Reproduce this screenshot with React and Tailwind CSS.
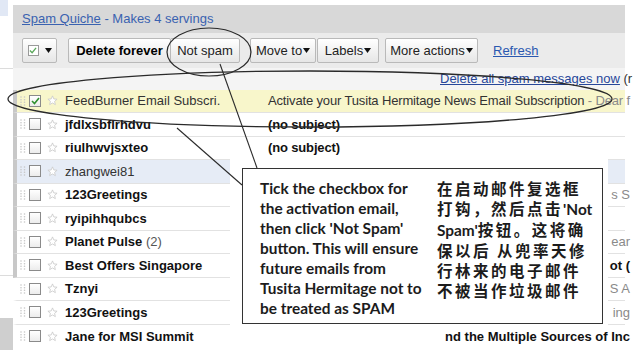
import React from 'react'

const rows = [
  { from: 'FeedBurner Email Subscri.', read: true, checked: true, bg: 'bg-[#f8f6cb]', subject: 'Activate your Tusita Hermitage News Email Subscription', snippet: ' - Dear f' },
  { from: 'jfdlxsbflrhdvu', subject: '(no subject)' },
  { from: 'riulhwvjsxteo', subject: '(no subject)' },
  { from: 'zhangwei81', read: true, bg: 'bg-[#e6ecf6]' },
  { from: '123Greetings', tail: 's S' },
  { from: 'ryipihhqubcs' },
  { from: 'Planet Pulse', count: '(2)', tail: 'ear' },
  { from: 'Best Offers Singapore', tail: 'ot (', tailBold: true },
  { from: 'Tznyi', tail: 'S A' },
  { from: '123Greetings', tail: 'ing' },
  { from: 'Jane for MSI Summit', tail: 'nd the Multiple Sources of Inc', tailBold: true },
]

const english = [
  'Tick the checkbox for',
  'the activation email,',
  "then click 'Not Spam'",
  'button. This will ensure',
  'future emails from',
  'Tusita Hermitage not to',
  'be treated as SPAM',
]

// latin bits inside the chinese lines get their own font and no tracking
const chinese = [
  ['在启动邮件复选框'],
  ['打钩，然后点击', "'Not"],
  ["Spam'", '按钮。这将确'],
  ['保以后 从兜率天修'],
  ['行林来的电子邮件'],
  ['不被当作垃圾邮件'],
]

const isLatin = (s) => /^[A-Za-z']+$/.test(s)

const Grip = () => (
  <svg width="6" height="10" viewBox="0 0 6 10" className="shrink-0">
    {[1, 3.7, 6.3, 9].map((y) =>
      [1, 4.5].map((x) => <circle key={`${x}-${y}`} cx={x} cy={y} r="0.8" fill="#c6c6c6" />)
    )}
  </svg>
)

const Check = ({ checked }) => (
  <span className="flex h-[12px] w-[12px] shrink-0 items-center justify-center border border-[#8a8a8a] bg-gradient-to-b from-white to-[#ececec]">
    {checked && (
      <svg width="9" height="8" viewBox="0 0 9 8">
        <path d="M1 4l2.5 2.5L8 1" fill="none" stroke="#2f8f2f" strokeWidth="1.6" />
      </svg>
    )}
  </span>
)

const Star = () => (
  <svg width="11" height="11" viewBox="0 0 24 24" className="shrink-0">
    <path
      d="M12 2l2.9 6.6 7.1.6-5.4 4.7 1.6 7.1L12 17.3 5.8 21l1.6-7.1L2 9.2l7.1-.6z"
      fill="#fff"
      stroke="#c9c9c9"
      strokeWidth="1.8"
      strokeLinejoin="round"
    />
  </svg>
)

const Caret = () => (
  <svg width="7" height="5" viewBox="0 0 7 5" className="ml-[1px] inline-block">
    <path d="M0 0h7L3.5 5z" fill="#111" />
  </svg>
)

const btn =
  'flex h-[25px] items-center justify-center rounded-[2px] border border-[#b9b9b9] bg-gradient-to-b from-white to-[#e6e6e6] text-[13px] text-[#222]'

function Row({ r, i, last }) {
  return (
    <div
      className={`flex h-[23.5px] items-center border-l-4 ${last ? '' : 'border-b border-b-[#e2e2e2]'} ${
        i < 8 ? 'border-l-[#c8c8c8]' : 'border-l-white'
      } ${r.bg || 'bg-white'}`}
    >
      <span className="ml-[3px]">
        <Grip />
      </span>
      <span className="ml-[3px]">
        <Check checked={r.checked} />
      </span>
      <span className="ml-[6px]">
        <Star />
      </span>
      <span
        className={`ml-[7px] w-[203px] shrink-0 whitespace-nowrap text-[13px] ${
          r.read ? 'font-normal text-[#333]' : 'font-bold text-[#111]'
        }`}
      >
        {r.from}
        {r.count && <span className="font-normal text-[#555]"> {r.count}</span>}
      </span>
      {r.subject && (
        <span
          className={`min-w-0 flex-1 whitespace-nowrap text-[13px] tracking-[-0.15px] ${
            r.read ? 'text-[#333]' : 'font-bold text-[#111]'
          }`}
        >
          {r.subject}
          {r.snippet && <span className="text-[#8a8a8a]">{r.snippet}</span>}
        </span>
      )}
      {r.tail && (
        <span
          className={`-mr-[5px] ml-auto whitespace-nowrap text-[13px] ${
            r.tailBold ? 'font-bold text-[#111]' : 'text-[#8a8a8a]'
          }`}
        >
          {r.tail}
        </span>
      )}
    </div>
  )
}

export default function App() {
  return (
    <div className="relative h-[358px] w-[640px] overflow-hidden bg-white font-['Liberation_Sans',Arial,sans-serif]">
      <div className="flex">
        <div className="flex w-[13px] shrink-0 flex-col">
          <div className="h-[16px] w-[8px] bg-[#e1e8f5]" />
          <div className="mt-[52px] h-px w-[13px] bg-[#dcdcdc]" />
          <div className="mt-[206px] h-px w-[13px] bg-[#dcdcdc]" />
          <div className="mt-[42px] h-[32px] w-[13px] bg-[#cfcfcf]" />
        </div>

        <div className="w-[612px] shrink-0 pt-[5px]">
          <div className="flex h-[28px] items-center bg-[#d8d8d8] pl-[9px] text-[13px] text-[#3a62b0]">
            <span className="underline">Spam Quiche</span>
            <span>&nbsp;- Makes 4 servings</span>
          </div>

          <div className="flex h-[35px] items-center bg-[#ebebeb]">
            <div className={`${btn} ml-[9px] w-[35px] gap-[5px]`}>
              <span className="flex h-[11px] w-[11px] items-center justify-center border border-[#9a9a9a] bg-white">
                <svg width="8" height="7" viewBox="0 0 9 8">
                  <path d="M1 4l2.5 2.5L8 1" fill="none" stroke="#5aa85a" strokeWidth="1.5" />
                </svg>
              </span>
              <Caret />
            </div>
            <div className={`${btn} ml-[11px] w-[103px] font-bold text-black`}>Delete forever</div>
            <div className={`${btn} -ml-px w-[70px]`}>Not spam</div>
            <div className={`${btn} ml-[10px] w-[66px]`}>
              Move to
              <Caret />
            </div>
            <div className={`${btn} ml-[1px] w-[62px]`}>
              Labels
              <Caret />
            </div>
            <div className={`${btn} ml-[6px] w-[93px]`}>
              More actions
              <Caret />
            </div>
            <span className="ml-[15px] text-[13px] text-[#2a58b0] underline">Refresh</span>
          </div>

          <div className="flex h-[21.5px] items-center whitespace-nowrap bg-[#f4f4f4] pl-[427px] text-[13px]">
            <span className="text-[#27479a] underline">Delete all spam messages now</span>
            <span className="text-[#333]">&nbsp;(r</span>
          </div>

          <div className="flex flex-col">
            {rows.map((r, i) => (
              <Row key={i} r={r} i={i} last={i === rows.length - 1} />
            ))}
          </div>
        </div>
      </div>

      <div className="absolute left-[230px] top-[159px] h-[168px] w-[378px] bg-white" />

      <div className="absolute left-[242px] top-[168px] flex h-[156px] w-[361px] border border-[#333] bg-white pt-[9px]">
        <div className="w-[194px] shrink-0 pl-[17px] font-['Lato',sans-serif] text-[15.4px] font-bold leading-[20px] text-[#1c1c1c]">
          {english.map((l) => (
            <div key={l} className="whitespace-nowrap">
              {l}
            </div>
          ))}
        </div>
        <div className="font-['Noto_Sans_CJK_SC',sans-serif] text-[15.5px] font-bold leading-[20px] tracking-[2.5px] text-[#1c1c1c]">
          {chinese.map((parts, n) => (
            <div key={n} className="whitespace-nowrap">
              {parts.map((p) =>
                isLatin(p) ? (
                  <span key={p} className="font-['Lato',sans-serif] text-[15.4px] tracking-normal">
                    {p}
                  </span>
                ) : (
                  <span key={p}>{p}</span>
                )
              )}
            </div>
          ))}
        </div>
      </div>

      <svg className="pointer-events-none absolute inset-0" width="640" height="358" viewBox="0 0 640 358">
        <ellipse cx="209" cy="52" rx="42" ry="24" fill="none" stroke="#2a2a2a" strokeWidth="1.2" />
        <ellipse cx="310" cy="99" rx="302" ry="28" fill="none" stroke="#2a2a2a" strokeWidth="1.3" />
        <line x1="220" y1="64" x2="257" y2="168" stroke="#2a2a2a" strokeWidth="1.1" />
        <line x1="177" y1="128" x2="242" y2="185" stroke="#2a2a2a" strokeWidth="1.1" />
      </svg>
    </div>
  )
}
